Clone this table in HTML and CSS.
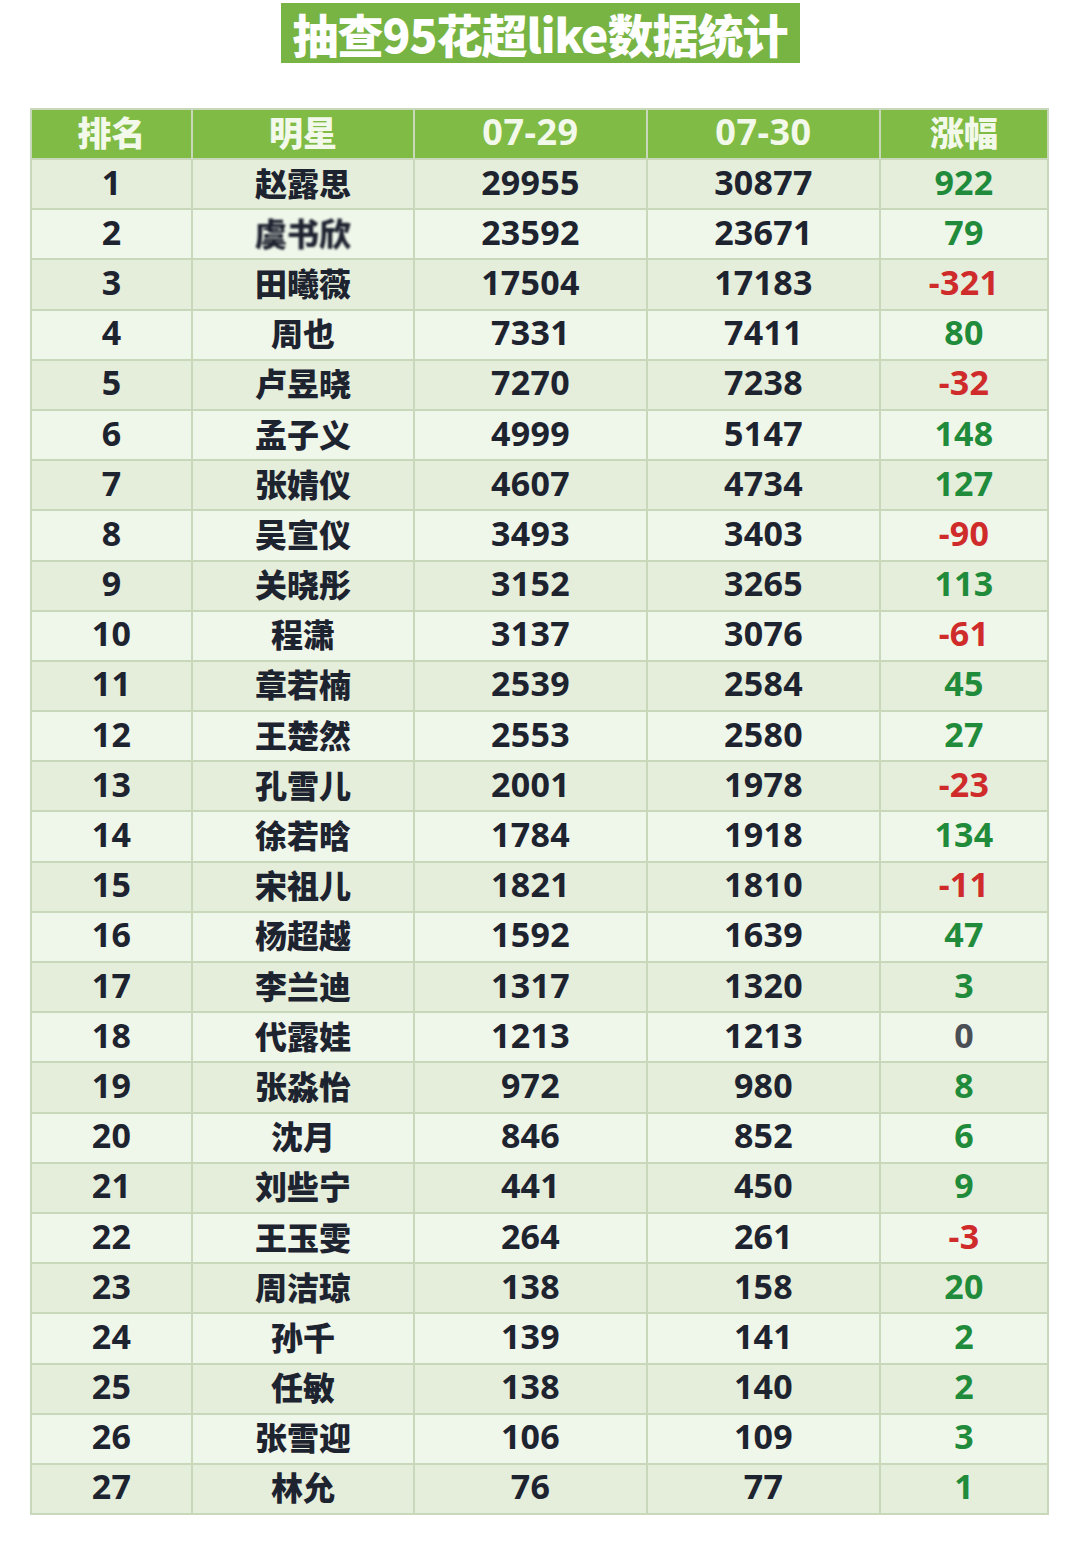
FILE: index.html
```html
<!DOCTYPE html>
<html lang="zh">
<head>
<meta charset="utf-8">
<title>抽查95花超like数据统计</title>
<link rel="stylesheet" href="styles.css">
</head>
<body>
<div class="page">
  <h1 class="title">抽查95花超like数据统计</h1>
  <table class="stats">
    <thead>
      <tr><th>排名</th><th>明星</th><th class="num">07-29</th><th class="num">07-30</th><th>涨幅</th></tr>
    </thead>
    <tbody>
      <tr><td>1</td><td class="name">赵露思</td><td>29955</td><td>30877</td><td class="up">922</td></tr>
      <tr><td>2</td><td class="name"><span class="masked">虞书欣</span></td><td>23592</td><td>23671</td><td class="up">79</td></tr>
      <tr><td>3</td><td class="name">田曦薇</td><td>17504</td><td>17183</td><td class="down">-321</td></tr>
      <tr><td>4</td><td class="name">周也</td><td>7331</td><td>7411</td><td class="up">80</td></tr>
      <tr><td>5</td><td class="name">卢昱晓</td><td>7270</td><td>7238</td><td class="down">-32</td></tr>
      <tr><td>6</td><td class="name">孟子义</td><td>4999</td><td>5147</td><td class="up">148</td></tr>
      <tr><td>7</td><td class="name">张婧仪</td><td>4607</td><td>4734</td><td class="up">127</td></tr>
      <tr><td>8</td><td class="name">吴宣仪</td><td>3493</td><td>3403</td><td class="down">-90</td></tr>
      <tr><td>9</td><td class="name">关晓彤</td><td>3152</td><td>3265</td><td class="up">113</td></tr>
      <tr><td>10</td><td class="name">程潇</td><td>3137</td><td>3076</td><td class="down">-61</td></tr>
      <tr><td>11</td><td class="name">章若楠</td><td>2539</td><td>2584</td><td class="up">45</td></tr>
      <tr><td>12</td><td class="name">王楚然</td><td>2553</td><td>2580</td><td class="up">27</td></tr>
      <tr><td>13</td><td class="name">孔雪儿</td><td>2001</td><td>1978</td><td class="down">-23</td></tr>
      <tr><td>14</td><td class="name">徐若晗</td><td>1784</td><td>1918</td><td class="up">134</td></tr>
      <tr><td>15</td><td class="name">宋祖儿</td><td>1821</td><td>1810</td><td class="down">-11</td></tr>
      <tr><td>16</td><td class="name">杨超越</td><td>1592</td><td>1639</td><td class="up">47</td></tr>
      <tr><td>17</td><td class="name">李兰迪</td><td>1317</td><td>1320</td><td class="up">3</td></tr>
      <tr><td>18</td><td class="name">代露娃</td><td>1213</td><td>1213</td><td class="zero">0</td></tr>
      <tr><td>19</td><td class="name">张淼怡</td><td>972</td><td>980</td><td class="up">8</td></tr>
      <tr><td>20</td><td class="name">沈月</td><td>846</td><td>852</td><td class="up">6</td></tr>
      <tr><td>21</td><td class="name">刘些宁</td><td>441</td><td>450</td><td class="up">9</td></tr>
      <tr><td>22</td><td class="name">王玉雯</td><td>264</td><td>261</td><td class="down">-3</td></tr>
      <tr><td>23</td><td class="name">周洁琼</td><td>138</td><td>158</td><td class="up">20</td></tr>
      <tr><td>24</td><td class="name">孙千</td><td>139</td><td>141</td><td class="up">2</td></tr>
      <tr><td>25</td><td class="name">任敏</td><td>138</td><td>140</td><td class="up">2</td></tr>
      <tr><td>26</td><td class="name">张雪迎</td><td>106</td><td>109</td><td class="up">3</td></tr>
      <tr><td>27</td><td class="name">林允</td><td>76</td><td>77</td><td class="up">1</td></tr>
    </tbody>
  </table>
</div>
</body>
</html>
```

FILE: styles.css
```css
html, body {
  margin: 0;
  padding: 0;
  background: #ffffff;
}

.page {
  width: 1080px;
  height: 1552px;
  padding-top: 3px;
  box-sizing: border-box;
  overflow: hidden;
  font-family: "Noto Sans", "Noto Sans CJK SC", sans-serif;
}

.title {
  margin: 0 auto;
  width: 519px;
  height: 60px;
  background: #78b443;
  color: #ffffff;
  font-family: "Noto Sans CJK SC", "Noto Sans", sans-serif;
  font-weight: 900;
  font-size: 46px;
  line-height: 60px;
  text-align: center;
  letter-spacing: -1px;
  white-space: nowrap;
}

.stats {
  margin: 45px 0 0 30px;
  width: 1019px;
  border-collapse: collapse;
  table-layout: fixed;
  border: 2px solid #c5d5b5;
}

.stats th,
.stats td {
  border: 2px solid #c9d8bb;
  padding: 0 0 5px 0;
  text-align: center;
  vertical-align: middle;
  white-space: nowrap;
}

.stats th {
  height: 43px;
  background: #80bc45;
  color: #f3f9ea;
  font-family: "Noto Sans CJK SC", "Noto Sans", sans-serif;
  font-weight: 900;
  font-size: 34px;
  line-height: 42px;
}

.stats th.num {
  font-family: "Noto Sans", "Noto Sans CJK SC", sans-serif;
  font-size: 36px;
  font-weight: 700;
  letter-spacing: 0.5px;
}

.stats th:nth-child(1), .stats td:nth-child(1) { width: 159px; }
.stats th:nth-child(2), .stats td:nth-child(2) { width: 220px; }
.stats th:nth-child(3), .stats td:nth-child(3) { width: 231px; }
.stats th:nth-child(4), .stats td:nth-child(4) { width: 231px; }

.stats td {
  height: 43.2px;
  color: #1e2330;
  font-weight: 700;
  font-size: 34px;
  line-height: 42px;
  letter-spacing: 0.3px;
}

.stats tbody tr:nth-child(odd) td { background: #e4eedb; }
.stats tbody tr:nth-child(even) td { background: #eff6ea; }

.stats td.name {
  font-family: "Noto Sans CJK SC", "Noto Sans", sans-serif;
  font-weight: 900;
  font-size: 32px;
  letter-spacing: 0;
}

.stats td.up { color: #1f8b3b; }
.stats td.down { color: #cf2b2b; }
.stats td.zero { color: #4a4f55; }

.masked {
  display: inline-block;
  filter: blur(0.8px);
}
```
